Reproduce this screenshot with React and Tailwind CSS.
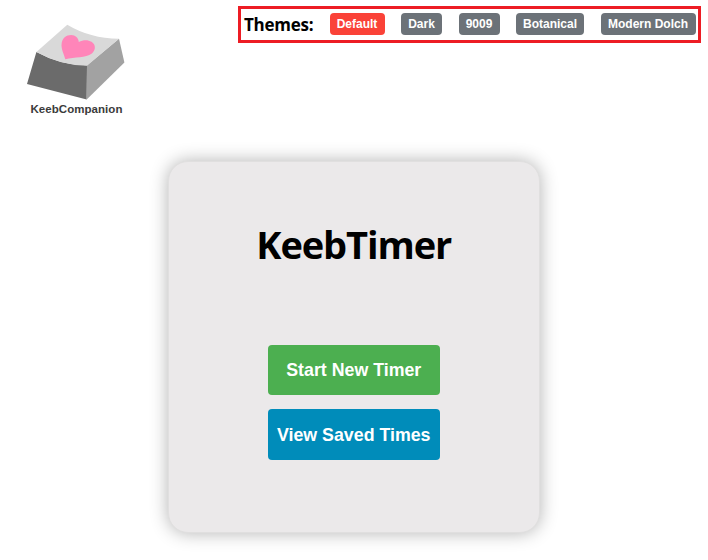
const themes = [
  { name: 'Default', style: 'w-[55px] bg-[#fa4238]' },
  { name: 'Dark', style: 'w-[41px] bg-[#6c7278]' },
  { name: '9009', style: 'w-[41px] bg-[#6c7278]' },
  { name: 'Botanical', style: 'w-[68px] bg-[#6c7278]' },
  { name: 'Modern Dolch', style: 'w-[95px] bg-[#6c7278]' },
];

function Logo() {
  return (
    <div className="ml-[26px] mt-[24px] w-[100px]">
      <svg width="100" height="77" viewBox="26 24 100 77" className="block">
        <path d="M36.4 52 Q61 65.5 87 65.3 L86.7 99.5 L27 84 Z" fill="#6b6b6b" />
        <path d="M87 65.3 L119 38.8 L124.4 62.4 L86.7 99.5 Z" fill="#a2a2a2" />
        <path d="M36.4 52 L67.3 24.8 Q90 38.5 119 38.8 L87 65.8 Q61 65.5 36.4 52 Z" fill="#d9d9d9" />
        <path d="M65.3 59.2 C63.8 54 61 49 61.6 43.8 C62.2 38.3 66.1 35.1 71.2 35.1 C75.4 35.1 78.5 38 78.8 42.1 C83 39.7 88 39.6 91.5 41.8 C96 44.6 95.9 50.3 91.9 53.4 C85.5 58.2 75 56.4 65.3 59.2 Z" fill="#ff85b9" />
      </svg>
      <div className="ml-[4.5px] mt-[1px] whitespace-nowrap font-['Liberation_Sans',Arial,sans-serif] text-[11.5px] leading-[14px] font-bold tracking-[0.05px] text-[#3b3b3b]">
        KeebCompanion
      </div>
    </div>
  );
}

function ThemeBar() {
  return (
    <nav className="mr-[7px] mt-[6px] flex h-[37px] w-[463px] items-center border-[3px] border-[#ed1c24] pl-[3px]">
      <span className="w-[85.5px] shrink-0 font-['Open_Sans','Noto_Sans',sans-serif] text-[17px] leading-[24px] font-bold tracking-[-0.25px]">Themes:</span>
      <div className="flex gap-[16.5px] pb-[1px]">
        {themes.map(({ name, style }) => (
          <button key={name} className={`h-[22.5px] shrink-0 rounded-[4px] text-center font-['Liberation_Sans',Arial,sans-serif] text-[12px] leading-[22px] font-bold whitespace-nowrap text-white ${style}`}>
            {name}
          </button>
        ))}
      </div>
    </nav>
  );
}

export default function App() {
  return (
    <div className="h-[560px] w-[708px] overflow-hidden bg-white text-black">
      <header className="flex h-[161px] items-start justify-between">
        <Logo />
        <ThemeBar />
      </header>
      <main className="ml-[167.5px] flex h-[372px] w-[372.5px] flex-col items-center rounded-[20px] border border-[#e0dfdf] bg-[#ebe9ea] shadow-[0_0_18px_rgba(0,0,0,0.3)]">
        <h1 className="mt-[55px] font-['Open_Sans','Noto_Sans',sans-serif] text-[38px] leading-[54px] font-bold tracking-[-1.1px]">KeebTimer</h1>
        <div className="mt-[74px] flex flex-col gap-[14px] font-['Liberation_Sans',Arial,sans-serif] text-[17.8px] font-bold text-white">
          <button className="h-[50px] w-[172px] rounded-[4px] bg-[#4caf50] whitespace-nowrap">Start New Timer</button>
          <button className="h-[51px] w-[172px] rounded-[4px] bg-[#008cba] pt-[1px] whitespace-nowrap">View Saved Times</button>
        </div>
      </main>
    </div>
  );
}
